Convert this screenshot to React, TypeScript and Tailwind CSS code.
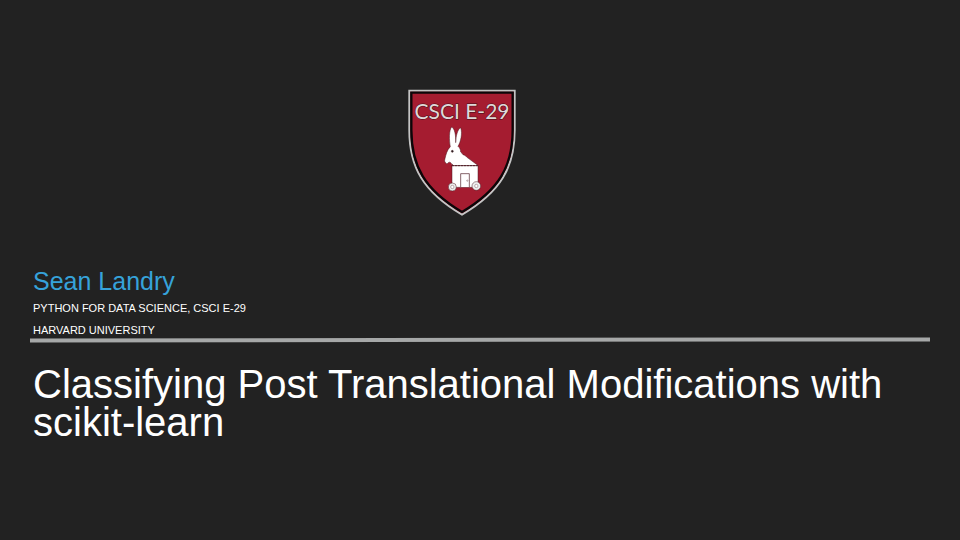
function Crest() {
  return (
    <svg className="h-32 w-[110px]" viewBox="0 0 110 128" role="img" aria-label="CSCI E-29 crest">
      <g transform="translate(-7 -9) scale(0.33333)">
        <path
          d="M28 32H344V150C344 262 302 336 186 404C70 336 28 262 28 150Z"
          fill="#a51c30"
          stroke="#c4c4c4"
          strokeWidth="6"
        />
        <path
          d="M34 38H338V150C338 259 297 330 186 396C75 330 34 259 34 150Z"
          fill="none"
          stroke="#0b0608"
          strokeWidth="7"
        />
      </g>
      <text
        x="55"
        y="30"
        textAnchor="middle"
        fontSize="21"
        fill="#e0d8d8"
        stroke="#3d1018"
        strokeWidth="1"
        paintOrder="stroke"
        className="font-[Lato,sans-serif]"
      >
        CSCI E-29
      </text>
      <g transform="translate(28 31) scale(0.33333)" stroke="#4a1a22" strokeWidth="1.5" strokeLinejoin="round">
        <path
          d="M46 80C42 60 42 30 50 21C59 25 63 46 62 68C63 46 68 28 77 23C83 40 77 66 69 79C75 84 77 90 77 96C80 98 82 101 84 104C90 105 93 109 96 112L130 137H54C53 134 52 131 51 134C47 125 42 124 36 132C30 128 27 123 30 116C33 103 36 90 46 80Z"
          fill="#fff"
        />
        <path d="M51 137H129V202H51Z" fill="#fff" />
        <path d="M50 137H130" strokeWidth="3" strokeDasharray="7 2" />
        <path d="M77 201V161H103V201" fill="#fff" strokeWidth="2" />
        <circle cx="97" cy="182" r="2" fill="#fff" strokeWidth="1" />
        <circle cx="52" cy="94" r="3" fill="#222" />
        <circle cx="52" cy="201" r="12" fill="#eee" />
        <circle cx="52" cy="201" r="5" fill="#fff" strokeWidth="1" />
        <circle cx="124" cy="198" r="13" fill="#eee" />
        <circle cx="124" cy="198" r="5" fill="#fff" strokeWidth="1" />
      </g>
    </svg>
  );
}

export default function App() {
  return (
    <main className="min-h-screen bg-[#222222] px-[30px] pt-[89px] font-['Liberation_Sans',Arial,sans-serif] text-white">
      <div className="flex justify-center pr-9">
        <Crest />
      </div>
      <section className="mt-12 px-[3px]">
        <h2 className="text-[25px] leading-8 text-[#36a2da]">Sean Landry</h2>
        <div className="mt-[3px] flex flex-col gap-1.5 text-[11px] leading-4">
          <p>PYTHON FOR DATA SCIENCE, CSCI E-29</p>
          <p>HARVARD UNIVERSITY</p>
        </div>
      </section>
      <svg className="block h-1 w-full" viewBox="0 0 900 4" preserveAspectRatio="none" overflow="visible" aria-hidden="true">
        <path d="M0 2.4L900 1.4" stroke="#a6a8a8" strokeWidth="4" />
      </svg>
      <h1 className="mt-[23px] px-[3px] text-[40px] leading-[38px]">
        Classifying Post Translational Modifications with scikit-learn
      </h1>
    </main>
  );
}
